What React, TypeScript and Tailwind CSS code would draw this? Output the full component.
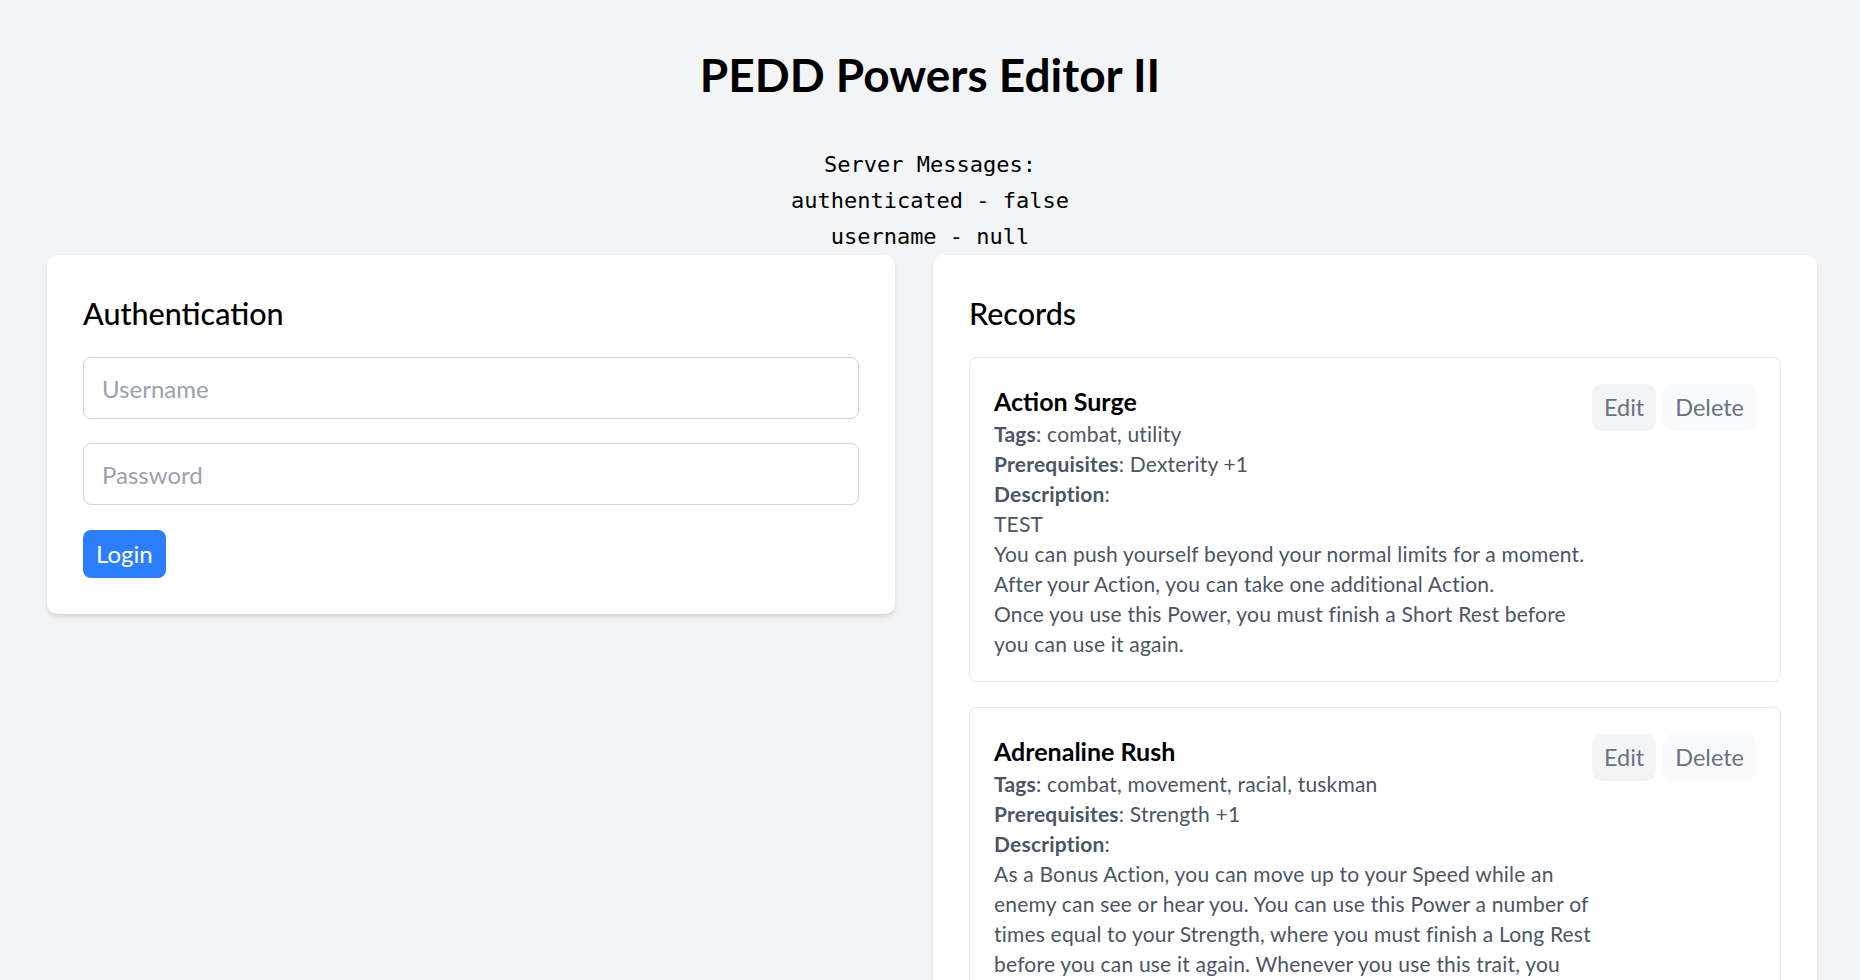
import React from "react";

interface PowerRecord {
    name: string;
    tags: string;
    prerequisites: string;
    description: string;
}

const records: PowerRecord[] = [
    {
        name: "Action Surge",
        tags: "combat, utility",
        prerequisites: "Dexterity +1",
        description:
            "TEST\nYou can push yourself beyond your normal limits for a moment.\nAfter your Action, you can take one additional Action.\nOnce you use this Power, you must finish a Short Rest before you can use it again.",
    },
    {
        name: "Adrenaline Rush",
        tags: "combat, movement, racial, tuskman",
        prerequisites: "Strength +1",
        description:
            "As a Bonus Action, you can move up to your Speed while an enemy can see or hear you. You can use this Power a number of times equal to your Strength, where you must finish a Long Rest before you can use it again. Whenever you use this trait, you gain a number of Temporary Hit Points equal to your Proficiency Bonus.",
    },
];

export default function App() {
    return (
        <div className="min-h-screen bg-gray-100 font-['Segoe_UI','Lato',sans-serif] text-black">
            <h1 className="pt-[51px] text-center text-[46px] font-bold leading-[48px]">PEDD Powers Editor II</h1>
            <pre className="mt-[48px] text-center font-['DejaVu_Sans_Mono',monospace] text-[22px] leading-[36px]">
                {"Server Messages:\nauthenticated - false\nusername - null"}
            </pre>

            <div className="flex items-start gap-[38px] pl-[47px] pr-[43px] pb-10">
                {/* login */}
                <div className="w-[848px] rounded-[10px] bg-white p-9 shadow-md">
                    <h2 className="mb-[22px] text-[30.5px] font-medium leading-[44px]">Authentication</h2>
                    <input
                        type="text"
                        placeholder="Username"
                        className="block h-[62px] w-full rounded-[8px] border border-gray-300 px-[18px] text-[24px] placeholder-gray-400 focus:outline-none"
                    />
                    <input
                        type="password"
                        placeholder="Password"
                        className="mt-[24px] block h-[62px] w-full rounded-[8px] border border-gray-300 px-[18px] text-[24px] placeholder-gray-400 focus:outline-none"
                    />
                    <button className="mt-[25px] h-[48px] rounded-[8px] bg-blue-500 px-[13px] text-[24px] text-white">
                        Login
                    </button>
                </div>

                {/* records */}
                <div className="flex-1 rounded-[10px] bg-white p-9 shadow-md">
                    <h2 className="mb-[22px] text-[30.5px] font-medium leading-[44px]">Records</h2>
                    <ul className="flex flex-col gap-[25px]">
                        {records.map((record, index) => (
                            <li key={index} className="flex items-start rounded-[8px] border border-gray-200 px-6 pt-[26px] pb-[22px]">
                                <div className="flex-1 text-[21px] leading-[30px] tracking-[0.2px] text-gray-600">
                                    <h3 className="text-[25px] font-bold leading-[35px] tracking-normal text-black">{record.name}</h3>
                                    <p><span className="font-bold">Tags</span>: {record.tags}</p>
                                    <p><span className="font-bold">Prerequisites</span>: {record.prerequisites}</p>
                                    <p><span className="font-bold">Description</span>:</p>
                                    <p className="whitespace-pre-line">{record.description}</p>
                                </div>
                                <div className="flex gap-[7px]">
                                    <button className="rounded-[10px] bg-gray-100 px-[12px] py-[6px] text-[23.5px] leading-[35px] text-gray-500">
                                        Edit
                                    </button>
                                    <button className="rounded-[10px] bg-gray-50 px-[12px] py-[6px] text-[23.5px] leading-[35px] text-gray-500">
                                        Delete
                                    </button>
                                </div>
                            </li>
                        ))}
                    </ul>
                </div>
            </div>
        </div>
    );
}
